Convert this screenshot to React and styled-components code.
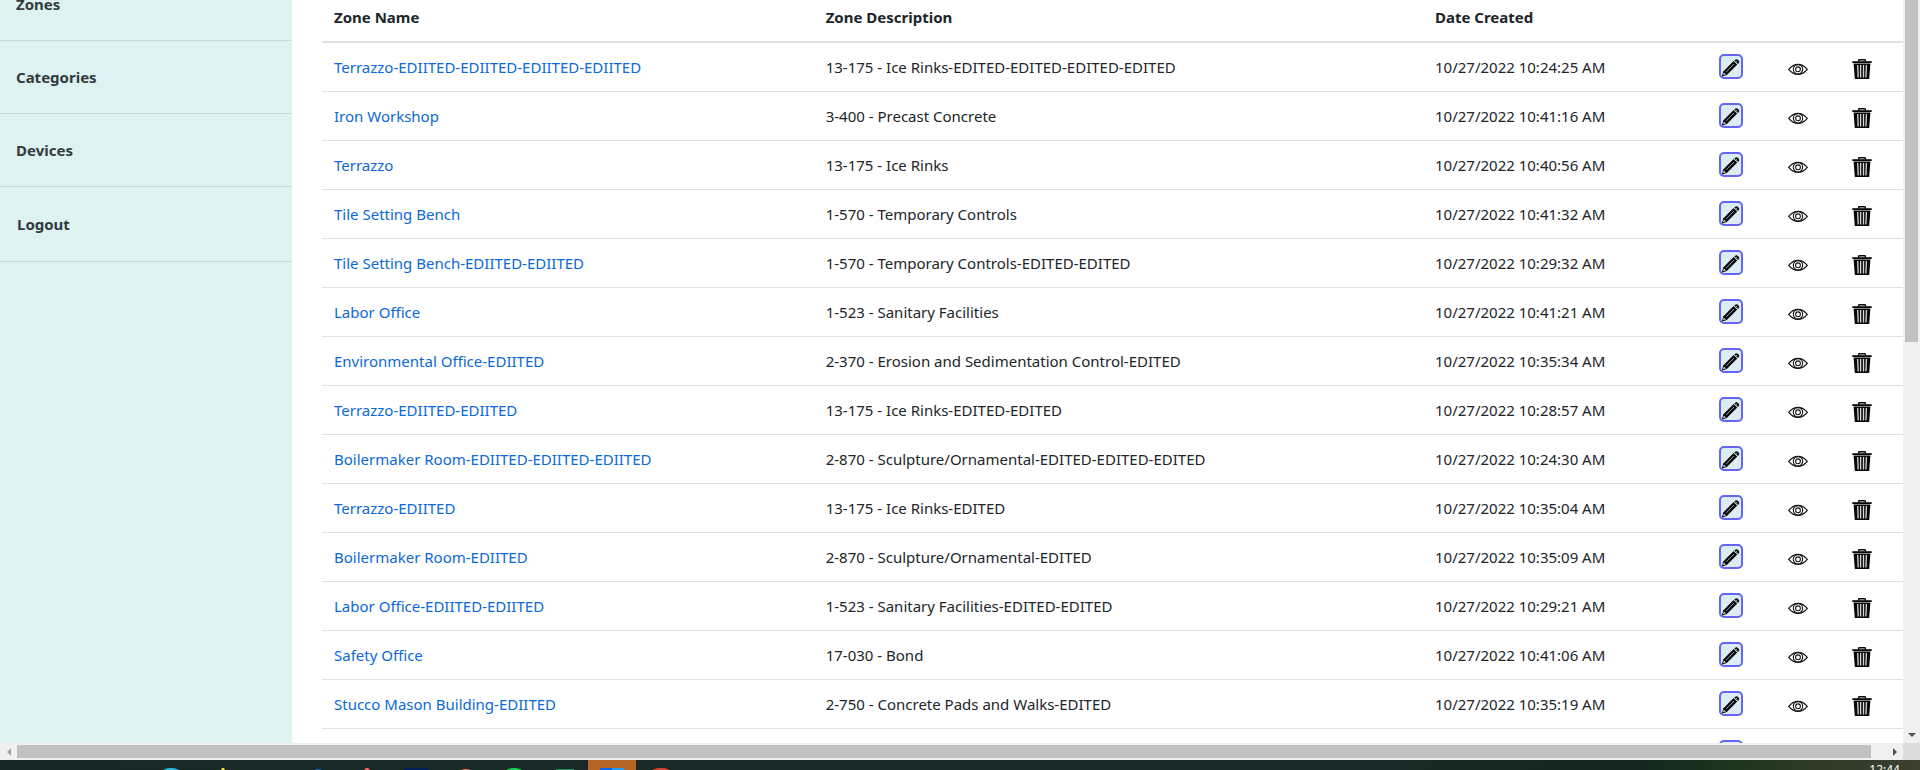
import React from "react";
import styled, { createGlobalStyle, css } from "styled-components";

const GlobalStyle = createGlobalStyle`
  *, *::before, *::after { box-sizing: border-box; }
  body {
    margin: 0;
    background: #fff;
    color: #212529;
    font-family: "Segoe UI", "Noto Sans", sans-serif;
    font-size: 15px;
    line-height: 24px;
  }
`;

const Screen = styled.div`
  display: flex;
  flex-direction: column;
  height: 100vh;
  overflow: hidden;
`;

const BrowserArea = styled.div`
  flex: 1;
  min-height: 0;
  display: flex;
`;

const Page = styled.div`
  flex: 1;
  min-width: 0;
  display: flex;
  overflow: hidden;
`;

const Sidebar = styled.nav`
  flex: 0 0 292px;
  background: #def2f1;
  overflow: hidden;
`;

const MenuList = styled.ul`
  list-style: none;
  margin: -32px 0 0;
  padding: 0;
`;

const MenuItem = styled.li`
  padding: ${(p) => (p.$last ? "25px 17px" : "24px 16px")};
  border-bottom: 1px solid #c4dad9;
`;

const MenuLink = styled.a`
  display: block;
  color: #343a40;
  font-weight: 700;
  text-decoration: none;
`;

const Content = styled.main`
  flex: 1;
  min-width: 0;
  padding-left: 30px;
  overflow: hidden;
`;

const ZoneTable = styled.table`
  width: 100%;
  table-layout: fixed;
  border-collapse: separate;
  border-spacing: 0;
`;

const HeadCell = styled.th`
  width: ${(p) => p.$width || "auto"};
  padding: 5px 12px 12px;
  border-bottom: 2px solid #dee2e6;
  text-align: left;
  font-weight: 700;
`;

const Cell = styled.td`
  padding: 12px;
  border-bottom: 1px solid #dee2e6;
  white-space: nowrap;
`;

const IconCell = styled(Cell)`
  padding: ${(p) => (p.$framed ? 11 : 16)}px 12px 12px;
  vertical-align: top;
`;

const ZoneLink = styled.a`
  color: #0b69d8;
  text-decoration: none;
`;

const IconButton = styled.button`
  display: block;
  width: 20px;
  height: 20px;
  padding: 0;
  border: 0;
  background: none;
  cursor: pointer;
  svg { display: block; }
  ${(p) =>
    p.$framed &&
    css`
      width: 24px;
      height: 25px;
      border: 2px solid #6464f6;
      border-radius: 5px;
      background: #dbecf3;
    `}
`;

const Track = styled.div`
  display: flex;
  background: #f0f0f0;
  ${(p) =>
    p.$vertical
      ? css`
          flex: 0 0 17px;
          flex-direction: column;
          justify-content: space-between;
          padding: 0 2px;
        `
      : css`
          flex: 1;
          align-items: stretch;
          padding: 2px 0;
        `}
`;

const Thumb = styled.div`
  background: #c1c1c1;
  ${(p) => (p.$vertical ? "height: 46%; width: 13px;" : "flex: 1; margin-right: 15px;")}
`;

const ArrowSlot = styled.div`
  display: flex;
  align-items: center;
  justify-content: center;
  width: ${(p) => (p.$vertical ? 13 : 17)}px;
  height: ${(p) => (p.$vertical ? 17 : 13)}px;
`;

const BottomBar = styled.div`
  flex: 0 0 17px;
  display: flex;
`;

const Corner = styled.div`
  flex: 0 0 17px;
  background: #dcdcdc;
`;

const Taskbar = styled.footer`
  flex: 0 0 10px;
  display: flex;
  justify-content: space-between;
  overflow: hidden;
  background: linear-gradient(90deg, #182826 0%, #1a2a27 70%, #14261f 85%, #1c341d 90%, #2c3a26 94%, #3c3f30 100%);
`;

const Clock = styled.time`
  padding-right: 20px;
  color: #fff;
  font-size: 12px;
  line-height: 20px;
`;

const ArrowIcon = ({ d, color }) => (
  <svg width="8" height="8" viewBox="0 0 8 8" aria-hidden="true">
    <path d={d} fill={color} />
  </svg>
);

const PencilIcon = () => (
  <svg width="20" height="21" viewBox="0 0 20 21" aria-hidden="true">
    <path d="M1 20.4 2.2 15.4 12.6 5 16.3 8.6 5.8 19Z" fill="#080808" />
    <path d="M13.2 4.4 14.6 3.4Q16 2.9 17.3 4.3T18.2 6.8L16.9 8.1Z" fill="#080808" />
    <path d="M1.8 19.3 2.9 16.4 5 18.4Z" fill="#b9c6ca" />
    <path d="M1 20.4 1.6 18.4 2.9 19.6Z" fill="#080808" />
    <path d="m5.2 15.9 7.8-7.8" stroke="#a8b5ba" strokeWidth=".9" />
    <path d="m12.8 4.8 3.8 3.7" stroke="#dbecf3" strokeWidth=".7" />
    <path d="m14.9 4.8 1.6 1.7" stroke="#a8b5ba" strokeWidth=".9" />
  </svg>
);

const EyeIcon = () => (
  <svg width="20" height="20" viewBox="0 0 20 20" fill="none" stroke="#161616" aria-hidden="true">
    <path d="M.7 10.3Q4.8 5.3 10 5.3T19.3 10.3Q15.2 15.3 10 15.3T.7 10.3Z" strokeWidth="1.2" />
    <circle cx="10" cy="10.3" r="4.7" strokeWidth="1.1" />
    <circle cx="10" cy="10.3" r="2.4" strokeWidth="1.1" />
  </svg>
);

const TrashIcon = () => (
  <svg width="20" height="20" viewBox="0 0 20 20" aria-hidden="true">
    <path d="M6.3 2.4 7 .7h6l.7 1.7" fill="none" stroke="#080808" strokeWidth="1.4" />
    <path d="M.3 2.2h19.4V4H.3Z" fill="#080808" />
    <path d="M1.6 4.4h16.8L17.2 20H2.8Z" fill="#080808" />
    <path d="m5.7 6 .5 12.4M8.6 6v12.4M11.5 6v12.4M14.4 6l-.5 12.4" stroke="#d8d8d8" strokeWidth="1.3" />
  </svg>
);

const TaskbarIcons = () => (
  <svg width="680" height="10" viewBox="0 0 680 10" aria-hidden="true">
    <path d="M588 0h48v10h-48Z" fill="#b46423" />
    <ellipse cx="171" cy="13" rx="10" ry="5" fill="#2cb9dc" />
    <path d="m221 10 1-2h2l1 2Z" fill="#eee34d" />
    <ellipse cx="318" cy="11" rx="4" ry="2" fill="#1769b5" />
    <path d="m364 10 2-2h2l2 2Z" fill="#f26d72" />
    <path d="M404 8h24v2h-24Z" fill="#00205c" />
    <ellipse cx="466" cy="12" rx="7" ry="3" fill="#e68360" />
    <ellipse cx="514" cy="13" rx="10" ry="5" fill="#20cf5b" />
    <path d="M556 9h18v1h-18Z" fill="#239762" />
    <path d="M600 8h12v2h-12Z" fill="#0868e8" />
    <path d="M612 8h12v2h-12Z" fill="#239bf0" />
    <ellipse cx="661" cy="13" rx="11" ry="5" fill="#e34035" />
  </svg>
);

const menu = ["Zones", "Categories", "Devices", "Logout"];

const zones = [
  ["Terrazzo-EDIITED-EDIITED-EDIITED-EDIITED", "13-175 - Ice Rinks-EDITED-EDITED-EDITED-EDITED", "10/27/2022 10:24:25 AM"],
  ["Iron Workshop", "3-400 - Precast Concrete", "10/27/2022 10:41:16 AM"],
  ["Terrazzo", "13-175 - Ice Rinks", "10/27/2022 10:40:56 AM"],
  ["Tile Setting Bench", "1-570 - Temporary Controls", "10/27/2022 10:41:32 AM"],
  ["Tile Setting Bench-EDIITED-EDIITED", "1-570 - Temporary Controls-EDITED-EDITED", "10/27/2022 10:29:32 AM"],
  ["Labor Office", "1-523 - Sanitary Facilities", "10/27/2022 10:41:21 AM"],
  ["Environmental Office-EDIITED", "2-370 - Erosion and Sedimentation Control-EDITED", "10/27/2022 10:35:34 AM"],
  ["Terrazzo-EDIITED-EDIITED", "13-175 - Ice Rinks-EDITED-EDITED", "10/27/2022 10:28:57 AM"],
  ["Boilermaker Room-EDIITED-EDIITED-EDIITED", "2-870 - Sculpture/Ornamental-EDITED-EDITED-EDITED", "10/27/2022 10:24:30 AM"],
  ["Terrazzo-EDIITED", "13-175 - Ice Rinks-EDITED", "10/27/2022 10:35:04 AM"],
  ["Boilermaker Room-EDIITED", "2-870 - Sculpture/Ornamental-EDITED", "10/27/2022 10:35:09 AM"],
  ["Labor Office-EDIITED-EDIITED", "1-523 - Sanitary Facilities-EDITED-EDITED", "10/27/2022 10:29:21 AM"],
  ["Safety Office", "17-030 - Bond", "10/27/2022 10:41:06 AM"],
  ["Stucco Mason Building-EDIITED", "2-750 - Concrete Pads and Walks-EDITED", "10/27/2022 10:35:19 AM"],
  ["", "", ""],
];

const ZoneRow = ({ name, description, created }) => (
  <tr>
    <Cell>{name && <ZoneLink href="#zone">{name}</ZoneLink>}</Cell>
    <Cell>{description}</Cell>
    <Cell>{created}</Cell>
    <IconCell $framed>
      <IconButton $framed type="button" aria-label="Edit"><PencilIcon /></IconButton>
    </IconCell>
    <IconCell>
      <IconButton type="button" aria-label="View"><EyeIcon /></IconButton>
    </IconCell>
    <IconCell>
      <IconButton type="button" aria-label="Delete"><TrashIcon /></IconButton>
    </IconCell>
  </tr>
);

export default function App() {
  return (
    <Screen>
      <GlobalStyle />
      <BrowserArea>
        <Page>
          <Sidebar>
            <MenuList>
              {menu.map((label, i) => (
                <MenuItem key={label} $last={i === menu.length - 1}>
                  <MenuLink href={"#" + label.toLowerCase()}>{label}</MenuLink>
                </MenuItem>
              ))}
            </MenuList>
          </Sidebar>
          <Content>
            <ZoneTable>
              <thead>
                <tr>
                  <HeadCell $width="31.1%">Zone Name</HeadCell>
                  <HeadCell>Zone Description</HeadCell>
                  <HeadCell $width="284px">Date Created</HeadCell>
                  <HeadCell $width="69px" />
                  <HeadCell $width="64px" />
                  <HeadCell $width="63px" />
                </tr>
              </thead>
              <tbody>
                {zones.map(([name, description, created], i) => (
                  <ZoneRow key={i} name={name} description={description} created={created} />
                ))}
              </tbody>
            </ZoneTable>
          </Content>
        </Page>
        <Track $vertical>
          <Thumb $vertical />
          <ArrowSlot $vertical><ArrowIcon d="M0 2h8L4 6Z" color="#505050" /></ArrowSlot>
        </Track>
      </BrowserArea>
      <BottomBar>
        <Track>
          <ArrowSlot><ArrowIcon d="M6 0v8L2 4Z" color="#a3a3a3" /></ArrowSlot>
          <Thumb />
          <ArrowSlot><ArrowIcon d="M2 0v8L6 4Z" color="#505050" /></ArrowSlot>
        </Track>
        <Corner />
      </BottomBar>
      <Taskbar>
        <TaskbarIcons />
        <Clock>12:44</Clock>
      </Taskbar>
    </Screen>
  );
}
